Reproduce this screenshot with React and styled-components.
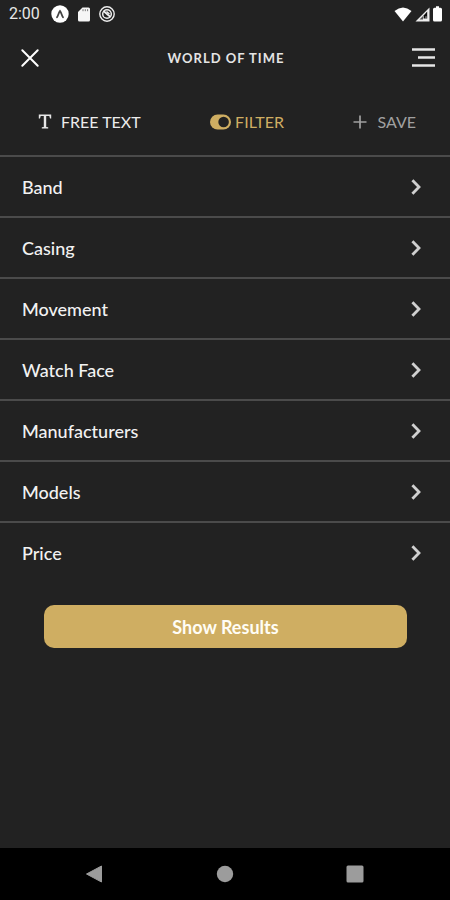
/**
 *
 * FilterScreen
 *
 */

import React from 'react';
import styled, { createGlobalStyle } from 'styled-components';

const GlobalStyle = createGlobalStyle`
  * {
    box-sizing: border-box;
  }

  body {
    margin: 0;
    background: #222222;
    color: #f2f2f2;
    font-family: Lato, 'Open Sans', sans-serif;
  }

  button {
    padding: 0;
    border: 0;
    background: none;
    color: inherit;
    font: inherit;
    cursor: pointer;
  }

  svg {
    display: block;
    flex: none;
  }
`;

const ScreenStyled = styled.div`
  display: flex;
  flex-direction: column;
  min-height: 100vh;
`;

const StatusBar = styled.div`
  display: flex;
  align-items: center;
  justify-content: space-between;
  height: 28px;
  padding: 0 8px 0 9px;
`;

const StatusGroup = styled.div`
  display: flex;
  align-items: center;
  gap: ${({ $gap }) => $gap}px;
`;

const Clock = styled.span`
  margin-right: 2px;
  color: #e8e8e8;
  font-family: Roboto, sans-serif;
  font-size: 16px;
  line-height: 20px;
`;

const Header = styled.header`
  display: flex;
  align-items: center;
  justify-content: space-between;
  height: 60px;
  padding: 0 15px 0 20px;
`;

const Title = styled.h1`
  margin: 0;
  color: #e4e4e4;
  font-size: 13px;
  font-weight: 700;
  letter-spacing: 1px;
`;

const Tabs = styled.nav`
  display: flex;
  align-items: center;
  justify-content: space-between;
  height: 67px;
  padding: 0 34px 0 38px;
`;

const Tab = styled.button`
  display: flex;
  align-items: center;
  gap: ${({ $gap }) => $gap}px;
  color: ${({ $color }) => $color};
  font-size: 16px;
  line-height: 24px;
`;

const List = styled.ul`
  margin: 0;
  padding: 0;
  list-style: none;
`;

const RowButton = styled.button`
  display: flex;
  align-items: center;
  justify-content: space-between;
  width: 100%;
  height: 61px;
  padding: 0 28px 0 22px;
  border-top: 2px solid #4b4b4b;
  color: #f2f2f2;
  font-size: 18px;
  font-weight: 500;
`;

const ShowResults = styled.button`
  height: 43px;
  margin: 23px 43px 0 44px;
  border-radius: 10px;
  background: #cfae62;
  color: #fffdf5;
  font-size: 18px;
  font-weight: 700;
`;

const SystemNav = styled.nav`
  display: flex;
  align-items: center;
  justify-content: space-between;
  height: 52px;
  margin-top: auto;
  padding: 0 86px 0 85px;
  background: #000000;
`;

const filters = [
  'Band',
  'Casing',
  'Movement',
  'Watch Face',
  'Manufacturers',
  'Models',
  'Price',
];

const ExpoIcon = () => (
  <svg width="18" height="18" viewBox="0 0 18 18">
    <circle cx="9" cy="9" r="8.7" fill="#fff" />
    <path
      d="M6 12.2C7.2 10.6 7.7 7.6 9 6C10.3 7.6 10.8 10.6 12 12.2"
      fill="none"
      stroke="#444"
      strokeWidth="1.8"
      strokeLinecap="round"
    />
  </svg>
);

const CardIcon = () => (
  <svg width="12" height="15" viewBox="0 0 12 15">
    <path
      d="M4.5 0.5H10.5Q12 0.5 12 2V13Q12 14.5 10.5 14.5H1.5Q0 14.5 0 13V5Z"
      fill="#f6f6f6"
    />
    <path d="M5 2.2V4.2M7.3 2.2V4.2M9.6 2.2V4.2" stroke="#777" />
  </svg>
);

const BlockedIcon = () => (
  <svg width="16" height="16" viewBox="0 0 16 16" fill="none" stroke="#eee">
    <circle cx="8" cy="8" r="7.2" strokeWidth="1.4" />
    <circle cx="8" cy="8" r="4.3" strokeWidth="1.5" />
    <path d="M4.5 5L11.5 11" strokeWidth="1.8" />
    <path d="M7.5 5.5L10.5 8" strokeWidth="1.4" />
  </svg>
);

const WifiIcon = () => (
  <svg width="18" height="15" viewBox="0 0 18 15">
    <path d="M0.5 4Q9 -3.2 17.5 4L9 14.5Z" fill="#fff" />
  </svg>
);

const SignalIcon = () => (
  <svg width="15" height="15" viewBox="0 0 15 15">
    <path d="M0.5 14.5H14.5V0.5Z" fill="#eee" />
    <path d="M4.5 12.5L8 9V12.5Z" fill="#555" />
    <path d="M8.6 11.6V8.4L12.2 4.6V11.6Z" fill="#0c0c0c" />
    <path d="M10.6 9.2H11.4V11.6H10.6Z" fill="#ddd" />
  </svg>
);

const BatteryIcon = () => (
  <svg width="9" height="16" viewBox="0 0 9 16">
    <path
      d="M3 0.3H6V1.8H7.5Q9 1.8 9 3.3V14Q9 15.5 7.5 15.5H1.5Q0 15.5 0 14V3.3Q0 1.8 1.5 1.8H3Z"
      fill="#fff"
    />
  </svg>
);

const CloseIcon = () => (
  <svg width="20" height="20" viewBox="0 0 20 20">
    <path
      d="M2.3 2.3L17.7 17.7M17.7 2.3L2.3 17.7"
      stroke="#fff"
      strokeWidth="2"
      strokeLinecap="round"
    />
  </svg>
);

const MenuIcon = () => (
  <svg width="23" height="20" viewBox="0 0 23 20">
    <path d="M0 1.5H23M6 9.5H23M0 17.5H23" stroke="#e6e6e6" strokeWidth="2.4" />
  </svg>
);

const SerifTIcon = () => (
  <svg width="14" height="15" viewBox="0 0 14 15">
    <path
      d="M0.8 0.5H13.2V4.5H12L11.3 2.1H8.2V12.9L10.2 13.3V14.5H3.8V13.3L5.8 12.9V2.1H2.7L2 4.5H0.8Z"
      fill="#e6e6e6"
    />
  </svg>
);

const ToggleIcon = () => (
  <svg width="21" height="16" viewBox="0 0 21 16">
    <rect y="0.4" width="21" height="15.2" rx="7.6" fill="#cfae62" />
    <circle cx="13.6" cy="8" r="5.3" fill="#222" />
  </svg>
);

const PlusIcon = () => (
  <svg width="14" height="14" viewBox="0 0 14 14">
    <path d="M7 0.5V13.5M0.5 7H13.5" stroke="#a0a0a0" strokeWidth="1.7" />
  </svg>
);

const ChevronIcon = () => (
  <svg width="12" height="18" viewBox="0 0 12 18">
    <path
      d="M2.4 2.2L9 9L2.4 15.8"
      fill="none"
      stroke="#d0d0d0"
      strokeWidth="2.8"
    />
  </svg>
);

const BackIcon = () => (
  <svg width="18" height="18" viewBox="0 0 18 18">
    <path
      d="M1.5 9L16.5 1V17Z"
      fill="#9c9c9c"
      stroke="#9c9c9c"
      strokeLinejoin="round"
    />
  </svg>
);

const HomeIcon = () => (
  <svg width="18" height="18" viewBox="0 0 18 18">
    <circle cx="9" cy="9" r="8.2" fill="#9c9c9c" />
  </svg>
);

const RecentsIcon = () => (
  <svg width="18" height="18" viewBox="0 0 18 18">
    <rect x="0.5" y="0.5" width="17" height="17" rx="1.5" fill="#9c9c9c" />
  </svg>
);

export default function App() {
  return (
    <ScreenStyled>
      <GlobalStyle />
      <StatusBar>
        <StatusGroup $gap={9}>
          <Clock>2:00</Clock>
          <ExpoIcon />
          <CardIcon />
          <BlockedIcon />
        </StatusGroup>
        <StatusGroup $gap={3}>
          <WifiIcon />
          <SignalIcon />
          <BatteryIcon />
        </StatusGroup>
      </StatusBar>

      <Header>
        <button type="button" aria-label="Close">
          <CloseIcon />
        </button>
        <Title>WORLD OF TIME</Title>
        <button type="button" aria-label="Menu">
          <MenuIcon />
        </button>
      </Header>

      <Tabs>
        <Tab type="button" $gap={9} $color="#ececec">
          <SerifTIcon />
          FREE TEXT
        </Tab>
        <Tab type="button" $gap={4} $color="#cfae62">
          <ToggleIcon />
          FILTER
        </Tab>
        <Tab type="button" $gap={10} $color="#a0a0a0">
          <PlusIcon />
          SAVE
        </Tab>
      </Tabs>

      <List>
        {filters.map(name => (
          <li key={name}>
            <RowButton type="button">
              {name}
              <ChevronIcon />
            </RowButton>
          </li>
        ))}
      </List>

      <ShowResults type="button">Show Results</ShowResults>

      <SystemNav>
        <button type="button" aria-label="Back">
          <BackIcon />
        </button>
        <button type="button" aria-label="Home">
          <HomeIcon />
        </button>
        <button type="button" aria-label="Recent apps">
          <RecentsIcon />
        </button>
      </SystemNav>
    </ScreenStyled>
  );
}
